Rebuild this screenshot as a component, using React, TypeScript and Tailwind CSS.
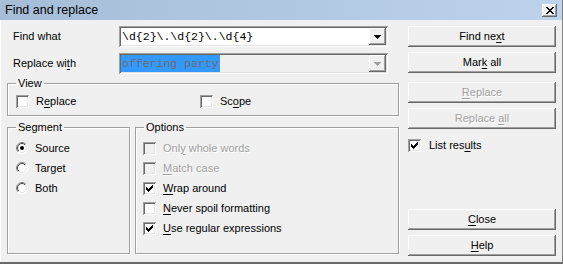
import React from "react";

const raised =
  "shadow-[inset_-1px_-1px_0_#696969,inset_1px_1px_0_#ffffff,inset_-2px_-2px_0_#a0a0a0,inset_2px_2px_0_#f0f0f0]";
const sunken =
  "shadow-[inset_1px_1px_0_#a0a0a0,inset_-1px_-1px_0_#ffffff,inset_2px_2px_0_#696969,inset_-2px_-2px_0_#e3e3e3]";
const etched = "border border-[#a0a0a0] shadow-[inset_1px_1px_0_#ffffff,1px_1px_0_#ffffff]";

function U({ children }: { children: React.ReactNode }) {
  return <span className="underline underline-offset-[2px]">{children}</span>;
}

function Check({ checked, disabled }: { checked?: boolean; disabled?: boolean }) {
  return (
    <span
      className={`relative block w-[13px] h-[13px] shrink-0 ${disabled ? "bg-[#f0f0f0]" : "bg-white"} ${sunken}`}
    >
      {checked && (
        <svg className="absolute left-0 top-0" width="13" height="13" viewBox="0 0 13 13" shapeRendering="crispEdges">
          <path d="M3 5h1v3h-1zM4 6h1v3h-1zM5 7h1v3h-1zM6 6h1v3h-1zM7 5h1v3h-1zM8 4h1v3h-1zM9 3h1v3h-1z" fill="#000" />
        </svg>
      )}
    </span>
  );
}

function Radio({ checked }: { checked?: boolean }) {
  return (
    <svg width="12" height="12" viewBox="0 0 12 12" className="shrink-0">
      <defs>
        <linearGradient id="rg" x1="0" y1="0" x2="1" y2="1">
          <stop offset="0.45" stopColor="#808080" />
          <stop offset="0.55" stopColor="#ffffff" />
        </linearGradient>
        <linearGradient id="rg2" x1="0" y1="0" x2="1" y2="1">
          <stop offset="0.45" stopColor="#404040" />
          <stop offset="0.55" stopColor="#e3e3e3" />
        </linearGradient>
      </defs>
      <circle cx="6" cy="6" r="5.5" fill="#fff" stroke="url(#rg)" strokeWidth="1" />
      <circle cx="6" cy="6" r="4.5" fill="none" stroke="url(#rg2)" strokeWidth="1" />
      {checked && <circle cx="6" cy="6" r="2" fill="#000" />}
    </svg>
  );
}

function Btn({
  children,
  disabled,
  className = "",
}: {
  children: React.ReactNode;
  disabled?: boolean;
  className?: string;
}) {
  return (
    <div
      className={`w-[148px] h-[21px] flex items-center justify-center bg-[#f0f0f0] ${raised} ${
        disabled ? "text-[#a0a0a0] [text-shadow:1px_1px_0_#ffffff]" : "text-black"
      } ${className}`}
    >
      <span>{children}</span>
    </div>
  );
}

function Arrow({ disabled }: { disabled?: boolean }) {
  return (
    <div className={`w-[17px] h-[17px] flex items-center justify-center bg-[#f0f0f0] ${raised}`}>
      <svg width="7" height="4" viewBox="0 0 7 4" shapeRendering="crispEdges">
        <path d="M0 0h7v1h-1v1h-1v1h-1v1h-1v-1h-1v-1h-1v-1h-1z" fill={disabled ? "#a0a0a0" : "#000"} />
      </svg>
    </div>
  );
}

function Legend({ children }: { children: React.ReactNode }) {
  return <legend className="ml-[8px] px-[2px] leading-[13px]">{children}</legend>;
}

export default function App() {
  return (
    <div className="w-[563px] h-[264px] bg-[#f0f0f0] flex flex-col font-['Liberation_Sans',Arial,sans-serif] text-[11px] leading-[13px] text-black overflow-hidden border-b-2 border-b-[#696969] border-r border-r-[#808080]">
      {/* Title bar */}
      <div className="h-[20px] shrink-0 bg-gradient-to-r from-[#a6bdd8] to-[#bcd3eb] flex items-center justify-between pl-[5px] pr-[5px]">
        <span className="text-[12.5px] leading-[14px]">Find and replace</span>
        <div className={`w-[15px] h-[13px] bg-[#f0f0f0] flex items-center justify-center ${raised}`}>
          <svg width="8" height="7" viewBox="0 0 8 7" shapeRendering="crispEdges">
            <path d="M0 0h2l2 2.5L6 0h2L5 3.5 8 7H6L4 4.5 2 7H0l3-3.5z" fill="#000" />
          </svg>
        </div>
      </div>

      {/* Body */}
      <div className="flex flex-row pl-[7px] pt-[6px] gap-[9px] flex-1 border-l border-l-white">
        {/* Left column */}
        <div className="w-[392px] flex flex-col -ml-px">
          <div className="flex items-center h-[21px]">
            <div className="w-[112px] pl-[6px]">Find what</div>
            <div className={`w-[269px] h-[21px] bg-white flex items-center pl-[3px] pr-[2px] ${sunken}`}>
              <span className="flex-1 font-['Liberation_Mono',monospace] text-[11.5px]">\d{"{"}2{"}"}\.\d{"{"}2{"}"}\.\d{"{"}4{"}"}</span>
              <Arrow />
            </div>
          </div>
          <div className="flex items-center h-[21px] mt-[6px]">
            <div className="w-[112px] pl-[6px]">
              Replace wi<U>t</U>h
            </div>
            <div className={`w-[269px] h-[21px] bg-[#f0f0f0] flex items-center pl-[2px] pr-[2px] py-[2px] ${sunken}`}>
              <div className="flex-1 h-full flex items-center">
                <span className="h-full flex items-center bg-[#3399ff] px-[1px] font-['Liberation_Mono',monospace] text-[11.5px] text-[#6e6a66]">
                  offering party
                </span>
              </div>
              <Arrow disabled />
            </div>
          </div>

          <fieldset className={`mt-[3px] h-[39px] ${etched}`}>
            <Legend>View</Legend>
            <div className="flex items-center pl-[8px] pt-[5px]">
              <div className="flex items-center gap-[7px] w-[184px]">
                <Check />
                <span>
                  R<U>e</U>place
                </span>
              </div>
              <div className="flex items-center gap-[7px]">
                <Check />
                <span>
                  Sc<U>o</U>pe
                </span>
              </div>
            </div>
          </fieldset>

          <div className="flex gap-[5px] mt-[5px]">
            <fieldset className={`w-[123px] h-[133px] ${etched}`}>
              <Legend>Segment</Legend>
              <div className="flex flex-col pl-[8px] pt-[4px]">
                <div className="flex items-center gap-[7px] h-[20px]">
                  <Radio checked />
                  <span>Source</span>
                </div>
                <div className="flex items-center gap-[7px] h-[20px]">
                  <Radio />
                  <span>Target</span>
                </div>
                <div className="flex items-center gap-[7px] h-[20px]">
                  <Radio />
                  <span>Both</span>
                </div>
              </div>
            </fieldset>
            <fieldset className={`w-[264px] h-[133px] ${etched}`}>
              <Legend>Options</Legend>
              <div className="flex flex-col pl-[7px] pt-[4px]">
                <div className="flex items-center gap-[7px] h-[20px] text-[#a0a0a0] [text-shadow:1px_1px_0_#ffffff]">
                  <Check disabled />
                  <span>
                    Onl<U>y</U> whole words
                  </span>
                </div>
                <div className="flex items-center gap-[7px] h-[20px] text-[#a0a0a0] [text-shadow:1px_1px_0_#ffffff]">
                  <Check disabled />
                  <span>
                    <U>M</U>atch case
                  </span>
                </div>
                <div className="flex items-center gap-[7px] h-[20px]">
                  <Check checked />
                  <span>
                    <U>W</U>rap around
                  </span>
                </div>
                <div className="flex items-center gap-[7px] h-[20px]">
                  <Check />
                  <span>
                    <U>N</U>ever spoil formatting
                  </span>
                </div>
                <div className="flex items-center gap-[7px] h-[20px]">
                  <Check checked />
                  <span>
                    <U>U</U>se regular expressions
                  </span>
                </div>
              </div>
            </fieldset>
          </div>
        </div>

        {/* Right column */}
        <div className="w-[148px] flex flex-col">
          <Btn>
            Find ne<U>x</U>t
          </Btn>
          <Btn className="mt-[5px]">
            Mar<U>k</U> all
          </Btn>
          <Btn disabled className="mt-[9px]">
            <U>R</U>eplace
          </Btn>
          <Btn disabled className="mt-[5px]">
            Replace <U>a</U>ll
          </Btn>
          <div className="flex items-center gap-[8px] mt-[10px] h-[13px]">
            <Check checked />
            <span>
              List res<U>u</U>lts
            </span>
          </div>
          <Btn className="mt-[57px]">
            <U>C</U>lose
          </Btn>
          <Btn className="mt-[5px]">
            <U>H</U>elp
          </Btn>
        </div>
      </div>
    </div>
  );
}
